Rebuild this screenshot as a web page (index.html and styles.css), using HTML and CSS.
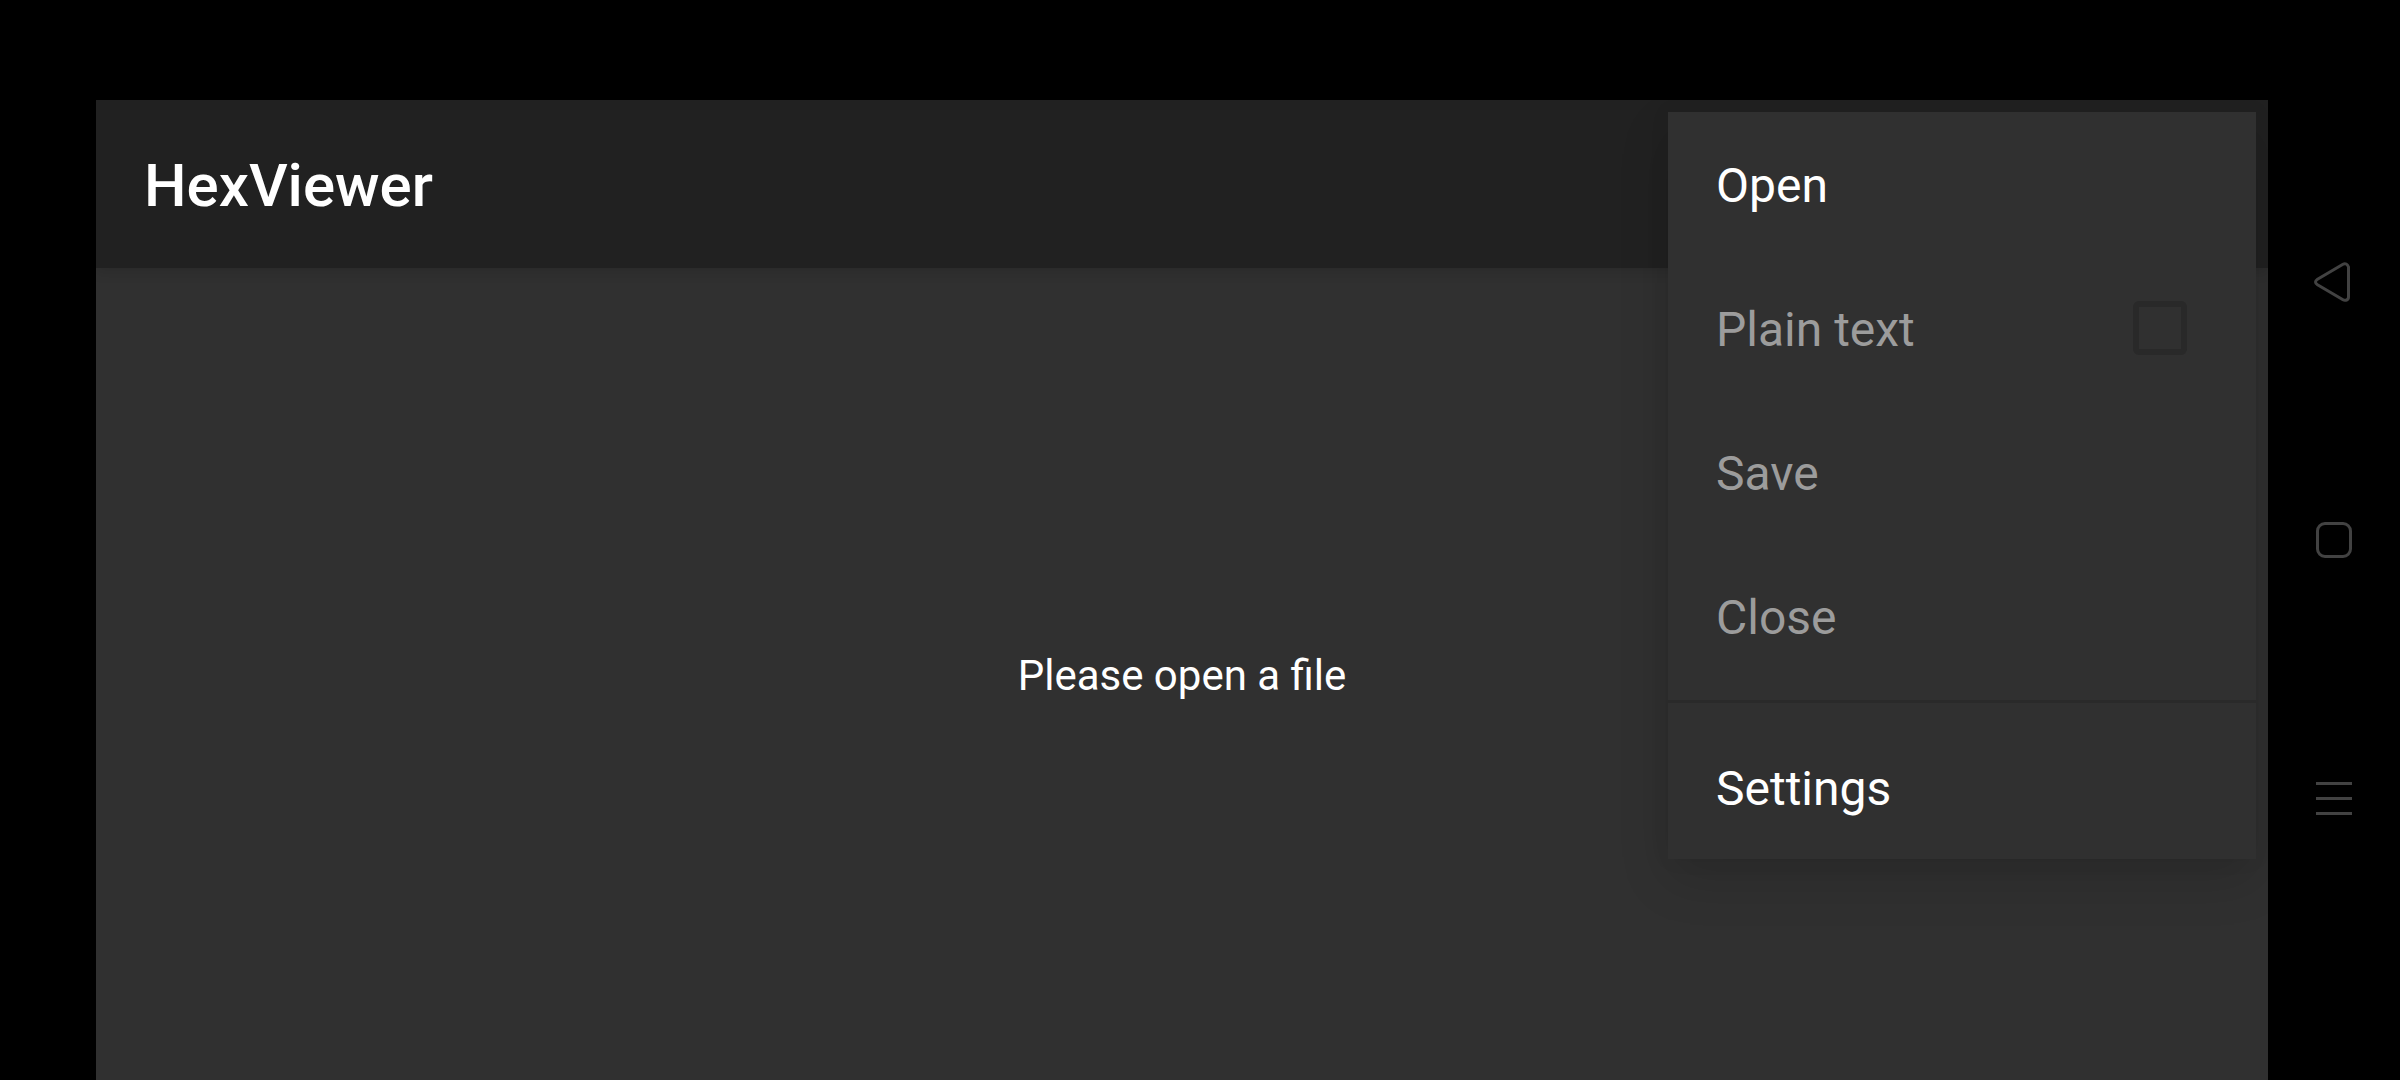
FILE: index.html
```html
<!DOCTYPE html>
<html lang="en">
<head>
<meta charset="utf-8">
<title>HexViewer</title>
<meta name="viewport" content="width=device-width, initial-scale=1">
<link rel="stylesheet" href="styles.css">
</head>
<body>
<div class="screen">
  <div class="app">
    <header class="app-bar">
      <h1 class="app-title">HexViewer</h1>
    </header>
    <main class="content">
      <p class="empty-message">Please open a file</p>
    </main>
    <div class="menu">
      <button class="menu-item" type="button">Open</button>
      <label class="menu-item menu-item-disabled" for="plain-text">
        Plain text
        <input class="menu-check" id="plain-text" type="checkbox" disabled>
      </label>
      <button class="menu-item menu-item-disabled" type="button" disabled>Save</button>
      <button class="menu-item menu-item-disabled" type="button" disabled>Close</button>
      <hr class="menu-divider">
      <button class="menu-item" type="button">Settings</button>
    </div>
  </div>
  <nav class="system-nav" aria-label="System">
    <button class="nav-button" type="button" aria-label="Back">
      <svg class="nav-icon" viewBox="0 0 48 48"><path d="M7.500 21.200 33 6.200Q34.700 5.200 36.200 6T38.500 9V39Q38.500 41.200 36.600 42T33 41.800L7.500 26.800Q5.500 25.500 5.500 24T7.500 21.200Z"/></svg>
    </button>
    <button class="nav-button" type="button" aria-label="Home">
      <svg class="nav-icon" viewBox="0 0 48 48"><rect x="7.500" y="7.500" width="33" height="33" rx="7.500"/></svg>
    </button>
    <button class="nav-button" type="button" aria-label="Recent apps">
      <svg class="nav-icon" viewBox="0 0 48 48"><path d="M6 9.500H42M6 24.500H42M6 39.500H42"/></svg>
    </button>
  </nav>
</div>
</body>
</html>
```
FILE: styles.css
```css
* {
  box-sizing: border-box;
}

body {
  margin: 0;
  background: #000;
  color: #fff;
  font-family: Roboto, "Noto Sans", sans-serif;
}

button {
  margin: 0;
  padding: 0;
  border: 0;
  background: none;
  color: inherit;
  font: inherit;
  text-align: left;
}

.screen {
  display: flex;
  min-height: 100vh;
  padding-left: 96px;
}

.app {
  position: relative;
  display: flex;
  flex: 1;
  flex-direction: column;
  margin-top: 100px;
  overflow: hidden;
  background: #303030;
}

.app-bar {
  display: flex;
  align-items: center;
  height: 168px;
  padding: 4px 48px 0;
  background: #212121;
  box-shadow: 0 4px 12px rgba(0, 0, 0, 0.12);
}

.app-title {
  margin: 0;
  font-size: 60px;
  font-weight: 500;
  line-height: 72px;
}

.content {
  display: flex;
  flex: 1;
  align-items: center;
  justify-content: center;
  padding-top: 4px;
}

.empty-message {
  margin: 0;
  font-size: 42px;
  line-height: 50px;
}

.menu {
  position: absolute;
  top: 12px;
  right: 12px;
  display: flex;
  flex-direction: column;
  width: 588px;
  background: #303030;
  box-shadow: 0 20px 48px rgba(0, 0, 0, 0.14), 0 0 20px rgba(0, 0, 0, 0.06);
}

.menu-item {
  display: flex;
  align-items: center;
  justify-content: space-between;
  height: 144px;
  padding: 4px 69px 0 48px;
  font-size: 48px;
  line-height: 56px;
}

.menu-item-disabled {
  color: #9c9c9c;
}

.menu-check {
  width: 54px;
  height: 54px;
  margin: 0 0 4px;
  border: 6px solid #292929;
  border-radius: 6px;
  appearance: none;
}

.menu-divider {
  width: 100%;
  height: 3px;
  margin: 12px 0;
  border: 0;
  background: #2a2a2a;
}

.system-nav {
  display: flex;
  flex-direction: column;
  align-items: center;
  justify-content: center;
  gap: 210px;
  width: 132px;
}

.nav-button {
  display: block;
  width: 48px;
  height: 48px;
}

.nav-icon {
  display: block;
  width: 48px;
  height: 48px;
  fill: none;
  stroke: #424242;
  stroke-width: 3;
}
```
